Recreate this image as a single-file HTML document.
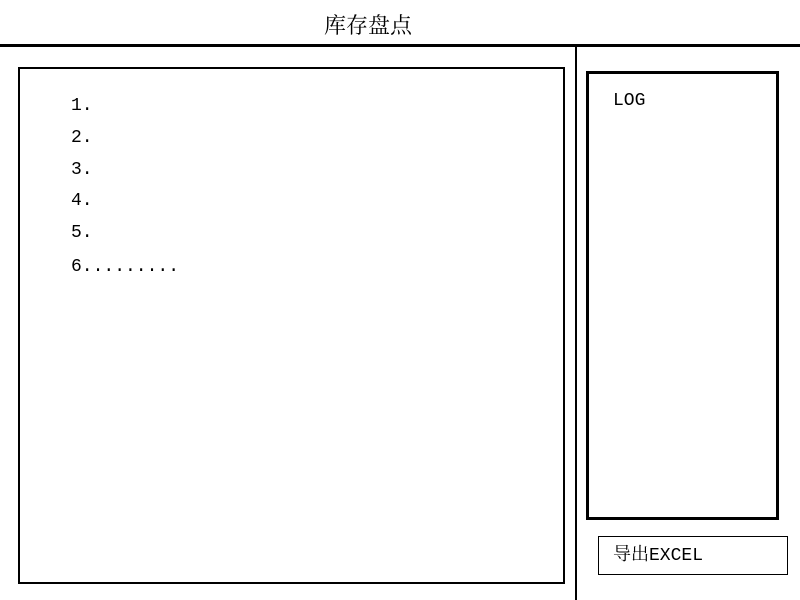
<!DOCTYPE html>
<html><head><meta charset="utf-8"><style>
body{margin:0;width:800px;height:600px;background:#fff;position:relative;overflow:hidden;font-family:"Liberation Mono","Noto Serif CJK SC",monospace;color:#000}
.a{position:absolute}
.t{font-size:18px;line-height:20px;white-space:nowrap}
</style></head><body>
<div class="a t" style="left:324px;top:13px;font-size:22px;line-height:24px;font-family:'Noto Serif CJK SC',serif">库存盘点</div>
<div class="a" style="left:0;top:44px;width:800px;height:3px;background:#000"></div>
<div class="a" style="left:575px;top:46px;width:2px;height:554px;background:#000"></div>
<div class="a" style="left:18px;top:67px;width:543px;height:513px;border:2px solid #000"></div>
<div class="a t" style="left:71px;top:96px">1.</div>
<div class="a t" style="left:71px;top:128px">2.</div>
<div class="a t" style="left:71px;top:160px">3.</div>
<div class="a t" style="left:71px;top:191px">4.</div>
<div class="a t" style="left:71px;top:223px">5.</div>
<div class="a t" style="left:71px;top:257px">6.........</div>
<div class="a" style="left:586px;top:71px;width:187px;height:443px;border:3px solid #000"></div>
<div class="a t" style="left:613px;top:91px">LOG</div>
<div class="a" style="left:598px;top:536px;width:188px;height:37px;border:1px solid #000"></div>
<div class="a t" style="left:613px;top:543px"><span style="font-family:'Noto Serif CJK SC',serif">导出</span>EXCEL</div>
</body></html>
